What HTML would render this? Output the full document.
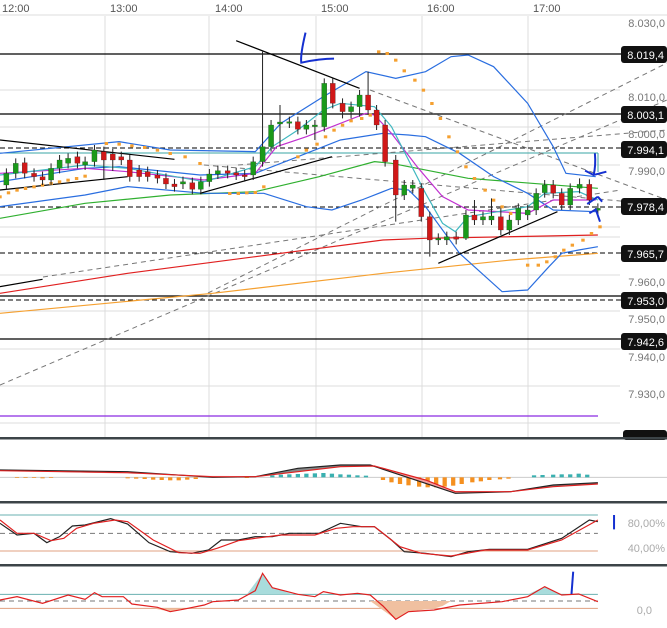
<!DOCTYPE html>
<html><head><meta charset="utf-8"><style>
html,body{margin:0;padding:0;background:#fff;width:667px;height:628px;overflow:hidden}
svg{display:block;font-family:"Liberation Sans",sans-serif}
.ns{vector-effect:non-scaling-stroke;fill:none}
.bd{vector-effect:non-scaling-stroke;stroke:#222;stroke-width:0.6}
</style></head><body>
<svg width="667" height="628" viewBox="0 0 667 628" xmlns="http://www.w3.org/2000/svg">
<g stroke="#dcdcdc" stroke-width="1">
<line x1="105" y1="16" x2="105" y2="438"/><line x1="209" y1="16" x2="209" y2="438"/>
<line x1="316" y1="16" x2="316" y2="438"/><line x1="422" y1="16" x2="422" y2="438"/>
<line x1="528" y1="16" x2="528" y2="438"/>
<line x1="0" y1="15" x2="667" y2="15"/>
<line x1="0" y1="90" x2="620" y2="90"/><line x1="0" y1="127" x2="620" y2="127"/>
<line x1="0" y1="165" x2="620" y2="165"/><line x1="0" y1="227" x2="620" y2="227"/>
<line x1="0" y1="237" x2="620" y2="237"/><line x1="0" y1="275" x2="620" y2="275"/>
<line x1="0" y1="311" x2="620" y2="311"/><line x1="0" y1="349" x2="620" y2="349"/>
<line x1="0" y1="386" x2="620" y2="386"/><line x1="0" y1="423" x2="620" y2="423"/>
</g>
<g font-size="11" fill="#555">
<text x="2" y="12">12:00</text><text x="110" y="12">13:00</text><text x="215" y="12">14:00</text>
<text x="321" y="12">15:00</text><text x="427" y="12">16:00</text><text x="533" y="12">17:00</text>
</g>
<g stroke="#000" stroke-width="1.2">
<line x1="0" y1="54" x2="622" y2="54"/><line x1="0" y1="114" x2="622" y2="114"/>
<line x1="0" y1="296" x2="622" y2="296"/><line x1="0" y1="339" x2="622" y2="339"/>
</g>
<g stroke="#000" stroke-width="1" stroke-dasharray="5,3">
<line x1="0" y1="148" x2="622" y2="148"/><line x1="0" y1="207" x2="622" y2="207"/>
<line x1="0" y1="253" x2="622" y2="253"/><line x1="0" y1="300" x2="622" y2="300"/>
</g>
<line x1="0" y1="153" x2="598" y2="153" stroke="#3aa6a6" stroke-width="1"/>
<line x1="598" y1="153" x2="598" y2="172" stroke="#3aa6a6" stroke-width="1"/>
<line x1="0" y1="416" x2="598" y2="416" stroke="#8a2be2" stroke-width="1.3"/>
<g stroke="#777" stroke-width="1" stroke-dasharray="5,4" fill="none">
<line x1="0" y1="385" x2="667" y2="100"/>
<line x1="208" y1="293" x2="667" y2="63"/>
<line x1="238" y1="165" x2="667" y2="130"/>
<line x1="370" y1="90" x2="667" y2="200"/>
<line x1="204" y1="165" x2="667" y2="205"/>
<line x1="43" y1="277" x2="621" y2="190"/>
</g>
<g transform="scale(0.42553,0.33333)">
<g stroke-width="1.2">
<polyline class="ns" stroke="#f5a030" points="0,940 500,880 900,820 1200,780 1405,760"/>
<polyline class="ns" stroke="#e02020" points="0,880 300,820 600,770 900,720 1000,715 1405,705"/>
<polyline class="ns" stroke="#30b030" points="0,655 200,610 400,585 600,575 750,530 880,485 920,490 1100,535 1250,550 1405,565"/>
<polyline class="ns" stroke="#2a6ee0" points="0,460 280,425 400,450 600,455 660,370 760,290 860,215 930,235 1000,215 1060,170 1100,165 1160,200 1240,310 1300,440 1330,520 1400,530"/>
<polyline class="ns" stroke="#2a6ee0" points="0,545 200,505 280,500 470,525 600,520 700,470 800,420 900,400 960,405 1000,410 1080,460 1160,530 1240,580 1300,630 1400,635"/>
<polyline class="ns" stroke="#2a6ee0" points="0,620 200,585 300,560 480,580 620,580 720,620 780,630 850,600 920,565 960,570 1000,620 1080,760 1180,875 1240,870 1290,800 1320,760 1360,750 1405,740"/>
<polyline class="ns" stroke="#c030d0" points="0,520 200,505 300,515 480,540 600,520 650,440 720,410 860,340 880,345 920,400 980,500 1040,590 1100,630 1240,640 1300,600 1400,600"/>
<polyline class="ns" stroke="#40b8c0" points="0,525 200,495 300,505 480,545 600,500 640,440 700,390 760,330 800,310 880,320 920,380 960,480 1000,580 1040,670 1070,695 1100,650 1240,620 1280,580 1360,575 1405,600"/>
</g>
<g stroke="#000" stroke-width="1.2">
<line class="ns" x1="555" y1="122" x2="845" y2="265"/>
<line class="ns" x1="0" y1="420" x2="410" y2="478"/>
<line class="ns" x1="0" y1="570" x2="300" y2="530"/>
<line class="ns" x1="470" y1="580" x2="780" y2="470"/>
<line class="ns" x1="1030" y1="790" x2="1310" y2="635"/>
<line class="ns" x1="0" y1="860" x2="100" y2="838"/>
</g>
<g fill="#f5a030">
<rect x="-4" y="586" width="8" height="9"/><rect x="16" y="574" width="8" height="9"/><rect x="36" y="566" width="8" height="9"/><rect x="56" y="561" width="8" height="9"/><rect x="76" y="556" width="8" height="9"/><rect x="96" y="551" width="8" height="9"/><rect x="116" y="546" width="8" height="9"/><rect x="136" y="541" width="8" height="9"/><rect x="156" y="536" width="8" height="9"/><rect x="176" y="531" width="8" height="9"/><rect x="196" y="524" width="8" height="9"/>
<rect x="246" y="426" width="8" height="9"/><rect x="276" y="428" width="8" height="9"/><rect x="306" y="433" width="8" height="9"/><rect x="336" y="438" width="8" height="9"/><rect x="366" y="446" width="8" height="9"/><rect x="396" y="456" width="8" height="9"/><rect x="431" y="466" width="8" height="9"/><rect x="466" y="486" width="8" height="9"/>
<rect x="536" y="576" width="8" height="9"/><rect x="556" y="576" width="8" height="9"/><rect x="576" y="574" width="8" height="9"/><rect x="596" y="573" width="8" height="9"/><rect x="616" y="556" width="8" height="9"/>
<rect x="696" y="466" width="8" height="9"/><rect x="716" y="446" width="8" height="9"/><rect x="741" y="428" width="8" height="9"/><rect x="761" y="406" width="8" height="9"/><rect x="781" y="386" width="8" height="9"/><rect x="801" y="371" width="8" height="9"/><rect x="821" y="358" width="8" height="9"/><rect x="846" y="351" width="8" height="9"/><rect x="866" y="341" width="8" height="9"/>
<rect x="886" y="151" width="8" height="9"/><rect x="906" y="156" width="8" height="9"/><rect x="926" y="176" width="8" height="9"/><rect x="946" y="208" width="8" height="9"/><rect x="971" y="236" width="8" height="9"/><rect x="991" y="266" width="8" height="9"/><rect x="1011" y="306" width="8" height="9"/><rect x="1031" y="351" width="8" height="9"/><rect x="1051" y="406" width="8" height="9"/><rect x="1071" y="451" width="8" height="9"/><rect x="1091" y="496" width="8" height="9"/><rect x="1111" y="531" width="8" height="9"/><rect x="1136" y="566" width="8" height="9"/><rect x="1156" y="596" width="8" height="9"/><rect x="1176" y="616" width="8" height="9"/><rect x="1196" y="636" width="8" height="9"/>
<rect x="1236" y="791" width="8" height="9"/><rect x="1261" y="791" width="8" height="9"/><rect x="1281" y="781" width="8" height="9"/><rect x="1301" y="766" width="8" height="9"/><rect x="1321" y="746" width="8" height="9"/><rect x="1341" y="731" width="8" height="9"/><rect x="1366" y="716" width="8" height="9"/><rect x="1386" y="696" width="8" height="9"/><rect x="1406" y="676" width="8" height="9"/>
</g>
<path class="ns" stroke="#222" stroke-width="1" d="M15,505V570M37,475V535M58,473V535M80,505V545M100,515V555M120,490V555M140,465V520M160,460V505M182,455V505M200,470V510M222,435V500M244,440V540M265,447V513M285,455V495M305,465V545M327,495V545M347,500V545M370,510V550M390,520V567M410,537V575M430,530V567M452,533V583M472,530V583M492,507V560M512,497V537M535,497V535M555,503V540M575,510V545M595,470V540M617,155V500M637,360V455M658,315V440M680,350V384M700,350V403M720,360V403M740,360V420M762,235V395M782,235V325M805,295V355M825,305V355M845,270V350M865,215V345M885,315V390M905,360V500M930,465V665M950,540V600M970,540V580M990,550V665M1010,635V770M1030,700V735M1050,695V735M1072,695V733M1095,630V720M1115,600V675M1135,635V675M1155,595V675M1177,625V705M1197,645V705M1218,610V675M1240,615V660M1260,565V645M1280,540V593M1300,540V595M1320,565V630M1340,550V630M1362,535V580M1385,538V615M1405,610V645"/>
<g fill="#1a9a1a" class="bd">
<rect x="9" y="520" width="12" height="35"/><rect x="31" y="490" width="12" height="30"/><rect x="114" y="505" width="12" height="35"/><rect x="134" y="480" width="12" height="25"/><rect x="154" y="475" width="12" height="15"/><rect x="194" y="485" width="12" height="10"/><rect x="216" y="450" width="12" height="35"/><rect x="424" y="545" width="12" height="7"/><rect x="466" y="545" width="12" height="23"/><rect x="486" y="522" width="12" height="23"/><rect x="506" y="512" width="12" height="10"/><rect x="589" y="485" width="12" height="40"/><rect x="611" y="440" width="12" height="45"/><rect x="631" y="375" width="12" height="65"/><rect x="652" y="366" width="12" height="6"/><rect x="674" y="365" width="12" height="5"/><rect x="714" y="375" width="12" height="13"/><rect x="734" y="375" width="12" height="5"/><rect x="756" y="250" width="12" height="130"/><rect x="819" y="320" width="12" height="15"/><rect x="839" y="285" width="12" height="35"/><rect x="944" y="555" width="12" height="30"/><rect x="964" y="555" width="12" height="10"/><rect x="1024" y="715" width="12" height="5"/><rect x="1044" y="710" width="12" height="10"/><rect x="1089" y="645" width="12" height="70"/><rect x="1129" y="650" width="12" height="10"/><rect x="1149" y="648" width="12" height="12"/><rect x="1191" y="660" width="12" height="30"/><rect x="1212" y="625" width="12" height="35"/><rect x="1234" y="630" width="12" height="15"/><rect x="1254" y="580" width="12" height="50"/><rect x="1274" y="555" width="12" height="23"/><rect x="1334" y="565" width="12" height="50"/><rect x="1356" y="553" width="12" height="12"/><rect x="1399" y="625" width="12" height="6"/>
</g>
<g fill="#d01818" class="bd">
<rect x="52" y="488" width="12" height="32"/><rect x="74" y="520" width="12" height="10"/><rect x="94" y="530" width="12" height="10"/><rect x="176" y="470" width="12" height="20"/><rect x="238" y="455" width="12" height="25"/><rect x="259" y="462" width="12" height="18"/><rect x="279" y="470" width="12" height="10"/><rect x="299" y="480" width="12" height="50"/><rect x="321" y="510" width="12" height="20"/><rect x="341" y="515" width="12" height="15"/><rect x="364" y="525" width="12" height="10"/><rect x="384" y="535" width="12" height="17"/><rect x="404" y="552" width="12" height="8"/><rect x="446" y="548" width="12" height="20"/><rect x="529" y="512" width="12" height="8"/><rect x="549" y="518" width="12" height="7"/><rect x="569" y="525" width="12" height="5"/><rect x="694" y="365" width="12" height="23"/><rect x="776" y="250" width="12" height="60"/><rect x="799" y="310" width="12" height="25"/><rect x="859" y="285" width="12" height="45"/><rect x="879" y="330" width="12" height="45"/><rect x="899" y="375" width="12" height="110"/><rect x="924" y="480" width="12" height="105"/><rect x="984" y="565" width="12" height="85"/><rect x="1004" y="650" width="12" height="70"/><rect x="1066" y="710" width="12" height="8"/><rect x="1109" y="645" width="12" height="15"/><rect x="1171" y="650" width="12" height="40"/><rect x="1294" y="555" width="12" height="25"/><rect x="1314" y="580" width="12" height="35"/><rect x="1379" y="553" width="12" height="47"/>
</g>
<g stroke="#1530d0" stroke-width="2" fill="none">
<path class="ns" d="M718,98 C712,130 706,170 708,188 C730,182 760,176 785,176"/>
<path class="ns" d="M1398,460 C1400,490 1398,510 1395,525 M1375,512 L1395,525 L1425,515"/>
<path class="ns" d="M1380,612 L1405,590 M1405,590 L1415,605 M1385,640 L1400,628 L1410,665"/>
</g>
</g>
<g font-size="11" fill="#777" text-anchor="end">
<text x="665" y="27">8.030,0</text><text x="665" y="101">8.010,0</text>
<text x="665" y="138">8.000,0</text><text x="665" y="175">7.990,0</text>
<text x="665" y="286">7.960,0</text><text x="665" y="323">7.950,0</text>
<text x="665" y="361">7.940,0</text><text x="665" y="398">7.930,0</text>
</g>
<g fill="#111">
<rect x="621" y="46" width="46" height="17" rx="3"/><rect x="621" y="106" width="46" height="17" rx="3"/>
<rect x="621" y="141" width="46" height="17" rx="3"/><rect x="621" y="198" width="46" height="17" rx="3"/>
<rect x="621" y="245" width="46" height="17" rx="3"/><rect x="621" y="292" width="46" height="17" rx="3"/>
<rect x="621" y="333" width="46" height="17" rx="3"/><rect x="623" y="430" width="44" height="10" rx="3"/>
</g>
<g font-size="11" fill="#fff" text-anchor="end">
<text x="664" y="59">8.019,4</text><text x="664" y="119">8.003,1</text>
<text x="664" y="154">7.994,1</text><text x="664" y="211">7.978,4</text>
<text x="664" y="258">7.965,7</text><text x="664" y="305">7.953,0</text>
<text x="664" y="346">7.942,6</text>
</g>
<rect x="0" y="437" width="667" height="2.5" fill="#3c4448"/>
<rect x="0" y="501" width="667" height="2.5" fill="#3c4448"/>
<rect x="0" y="564" width="667" height="2.5" fill="#3c4448"/>
<g transform="translate(0,320) scale(0.42553,0.33333)">
<line class="ns" x1="0" y1="472" x2="1568" y2="472" stroke="#ccc"/>
<g fill="#f59020">
<rect x="35" y="472" width="10" height="2"/><rect x="55" y="472" width="10" height="2"/><rect x="75" y="472" width="10" height="2"/><rect x="95" y="472" width="10" height="3"/><rect x="115" y="472" width="10" height="2"/><rect x="295" y="472" width="10" height="3"/><rect x="315" y="472" width="10" height="4"/><rect x="335" y="472" width="10" height="5"/><rect x="355" y="472" width="10" height="7"/><rect x="375" y="472" width="10" height="8"/><rect x="395" y="472" width="10" height="9"/><rect x="415" y="472" width="10" height="9"/><rect x="435" y="472" width="10" height="7"/><rect x="455" y="472" width="10" height="5"/><rect x="575" y="472" width="10" height="2"/>
<rect x="895" y="472" width="10" height="8"/><rect x="915" y="472" width="10" height="15"/><rect x="935" y="472" width="10" height="20"/><rect x="955" y="472" width="10" height="24"/><rect x="980" y="472" width="10" height="28"/><rect x="1000" y="472" width="10" height="30"/><rect x="1020" y="472" width="10" height="30"/><rect x="1040" y="472" width="10" height="28"/><rect x="1060" y="472" width="10" height="25"/><rect x="1080" y="472" width="10" height="20"/><rect x="1105" y="472" width="10" height="15"/><rect x="1125" y="472" width="10" height="12"/><rect x="1145" y="472" width="10" height="8"/><rect x="1170" y="472" width="10" height="6"/><rect x="1190" y="472" width="10" height="4"/>
</g>
<g fill="#3ab0b0">
<rect x="635" y="466" width="10" height="6"/><rect x="655" y="464" width="10" height="8"/><rect x="675" y="463" width="10" height="9"/><rect x="695" y="462" width="10" height="10"/><rect x="715" y="461" width="10" height="11"/><rect x="735" y="460" width="10" height="12"/><rect x="755" y="459" width="10" height="13"/><rect x="775" y="461" width="10" height="11"/><rect x="795" y="463" width="10" height="9"/><rect x="815" y="464" width="10" height="8"/><rect x="835" y="466" width="10" height="6"/><rect x="855" y="467" width="10" height="5"/>
<rect x="1250" y="466" width="10" height="6"/><rect x="1270" y="465" width="10" height="7"/><rect x="1295" y="464" width="10" height="8"/><rect x="1315" y="463" width="10" height="9"/><rect x="1335" y="463" width="10" height="9"/><rect x="1355" y="461" width="10" height="11"/><rect x="1375" y="464" width="10" height="8"/>
</g>
<path d="M0,450 L600,470 700,445 800,435 870,435 1000,490 1070,520 1200,515 1300,495 1405,488 L1405,492 1300,500 1200,515 1070,515 1000,480 880,438 800,440 700,455 600,470 0,452Z" fill="#f4a0a0"/>
<path d="M600,470 L700,445 800,435 870,435 880,438 800,440 700,455Z M1200,515 L1300,495 1405,488 1405,492 1300,500Z" fill="#888"/>
<polyline class="ns" stroke="#222" stroke-width="1.2" points="0,450 300,455 500,472 600,470 700,445 800,435 870,435 1000,490 1070,520 1200,515 1300,495 1405,488"/>
<polyline class="ns" stroke="#e02020" stroke-width="1.2" points="0,452 300,458 500,470 600,470 700,455 800,440 880,438 1000,480 1070,515 1200,515 1300,500 1405,492"/>
<line class="ns" x1="0" y1="585" x2="1405" y2="585" stroke="#6ab0b0"/>
<line class="ns" x1="0" y1="640" x2="1405" y2="640" stroke="#777" stroke-dasharray="5,4"/>
<line class="ns" x1="0" y1="693" x2="1405" y2="693" stroke="#e0a080"/>
<polyline class="ns" stroke="#222" stroke-width="1.2" points="0,610 40,645 80,640 110,668 140,650 170,618 200,615 260,596 300,612 350,668 400,695 450,700 490,690 520,660 560,660 600,650 640,650 680,640 750,640 800,610 850,620 880,620 920,660 950,695 1000,700 1060,710 1100,695 1150,688 1240,688 1320,655 1385,600 1405,605"/>
<polyline class="ns" stroke="#e02020" stroke-width="1.2" points="0,600 40,640 80,640 120,662 150,655 180,625 220,610 270,600 300,605 360,660 420,698 470,700 510,685 560,662 600,655 660,645 740,645 790,625 830,620 880,620 940,680 990,700 1060,708 1140,690 1240,690 1320,660 1405,600"/>
<line class="ns" x1="0" y1="823" x2="1405" y2="823" stroke="#6ab0b0"/>
<line class="ns" x1="0" y1="843" x2="1405" y2="843" stroke="#777" stroke-dasharray="5,4"/>
<line class="ns" x1="0" y1="865" x2="1405" y2="865" stroke="#e0a080"/>
<path d="M580,823 L617,760 640,803 690,823Z M1240,823 L1280,800 1320,823Z" fill="#a8dcdc"/>
<path d="M870,843 L930,898 960,875 1020,865 1040,858 1060,843Z M360,865 L400,875 430,865Z" fill="#f0c0a0"/>
<polyline class="ns" stroke="#e02020" stroke-width="1.2" points="0,840 40,830 100,850 160,825 200,838 222,818 240,830 290,830 310,852 370,862 400,875 430,868 480,855 500,845 560,840 600,812 617,760 640,803 700,823 740,830 760,815 800,825 840,820 870,825 900,858 930,898 960,875 1020,870 1080,855 1180,845 1240,830 1280,800 1320,825 1360,822 1405,845"/>
<path class="ns" d="M1443,585 L1443,628 M1347,755 L1343,822" stroke="#1530d0" stroke-width="2"/>
</g>
<g font-size="11" fill="#aaa" text-anchor="end">
<text x="665" y="527">80,00%</text><text x="665" y="552">40,00%</text><text x="652" y="614">0,0</text>
</g>
</svg>
</body></html>
